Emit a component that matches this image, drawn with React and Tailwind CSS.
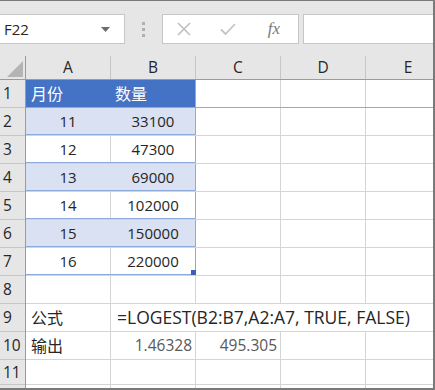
import React from 'react';

const font = { fontFamily: '"Open Sans", "Noto Sans CJK SC", sans-serif' };

const cols = ['A', 'B', 'C', 'D', 'E'];

const tableRows = [
  ['11', '33100'],
  ['12', '47300'],
  ['13', '69000'],
  ['14', '102000'],
  ['15', '150000'],
  ['16', '220000'],
];

const Cell = ({ className = '', children }) => (
  <div className={`w-[85px] h-full shrink-0 border-r border-[#d4d4d4] flex items-center ${className}`}>
    {children}
  </div>
);

const RowHead = ({ n }) => (
  <div className="w-[26px] h-full shrink-0 bg-[#e6e6e6] border-r border-[#9b9b9b] flex items-center pl-[3px] text-[15.5px] text-[#262626]">
    {n}
  </div>
);

const Row = ({ n, children, className = 'border-[#d4d4d4]' }) => (
  <div className="flex h-[28px] relative">
    <RowHead n={n} />
    <div className={`flex flex-1 border-b ${className}`}>{children}</div>
    <div className="absolute left-0 bottom-0 w-[25px] h-px bg-[#c6c6c6]" />
  </div>
);

export default function App() {
  return (
    <div
      className="w-[435px] h-[390px] overflow-hidden bg-white border-t border-r-2 border-b-2 border-[#7a7a7a] text-[#262626]"
      style={font}
    >
      {/* formula bar */}
      <div className="h-[55px] bg-[#e6e6e6] flex items-start pt-[13px]">
        <div className="w-[125px] h-[30px] bg-white border border-l-0 border-[#c6c6c6] flex items-center justify-between pl-[4px] pr-[14px]">
          <span className="text-[15px] text-[#262626]">F22</span>
          <svg width="9" height="5" viewBox="0 0 9 5"><path d="M0 0h9L4.5 5z" fill="#6b6b6b" /></svg>
        </div>
        <div className="w-[37px] h-[30px] flex flex-col items-center justify-center gap-[3px]">
          <div className="w-[3px] h-[3px] bg-[#b0b0b0]" />
          <div className="w-[3px] h-[3px] bg-[#b0b0b0]" />
          <div className="w-[3px] h-[3px] bg-[#b0b0b0]" />
        </div>
        <div className="w-[137px] h-[30px] bg-white border border-[#c6c6c6] flex items-center">
          <div className="w-[42px] flex justify-center">
            <svg width="14" height="14" viewBox="0 0 14 14"><path d="M1 1l12 12M13 1L1 13" stroke="#bfbfbf" strokeWidth="1.6" /></svg>
          </div>
          <div className="w-[46px] flex justify-center">
            <svg width="16" height="12" viewBox="0 0 16 12"><path d="M1 6.5l4.5 4.5L15 1" stroke="#c4c4c4" strokeWidth="1.8" fill="none" /></svg>
          </div>
          <div className="w-[46px] flex justify-center">
            <span className="text-[17px] italic text-[#7a7a7a]" style={{ fontFamily: '"Liberation Serif", serif' }}>fx</span>
          </div>
        </div>
        <div className="ml-[4px] flex-1 h-[30px] bg-white border border-r-0 border-[#c6c6c6]" />
      </div>

      {/* column headers */}
      <div className="flex h-[24px] bg-[#e6e6e6] border-b border-[#9b9b9b]">
        <div className="w-[26px] h-full shrink-0 border-r border-[#9b9b9b] flex items-end justify-end pr-[2px] pb-[2px]">
          <svg width="16" height="16" viewBox="0 0 16 16"><path d="M16 0V16H0z" fill="#b4b4b4" /></svg>
        </div>
        {cols.map(c => (
          <div key={c} className="w-[85px] shrink-0 h-full border-r border-[#c6c6c6] flex items-center justify-center text-[15.5px] text-[#262626]">
            {c}
          </div>
        ))}
      </div>

      {/* row 1 - table header */}
      <Row n="1" className="border-[#8ea9db]">
        <div className="w-[170px] shrink-0 h-full bg-[#4472c4] border-r border-[#8ea9db] flex items-center text-[16px] text-white">
          <span className="w-[85px] pl-[5px]">月份</span>
          <span className="pl-[4px]">数量</span>
        </div>
        <Cell />
        <Cell />
        <Cell className="border-r-0" />
      </Row>

      {tableRows.map(([a, b], i) => {
        const band = i % 2 === 0;
        return (
          <div key={a} className="flex h-[28px] relative">
            <RowHead n={i + 2} />
            <div className="flex flex-1 border-b border-[#d4d4d4]">
              <div className={`w-[170px] shrink-0 h-full flex border-r border-b border-[#8ea9db] relative ${band ? 'bg-[#d9e1f2]' : ''}`}>
                <div className={`w-[85px] h-full flex items-center justify-center text-[15px] border-r ${band ? 'border-[#d9e1f2]' : 'border-[#d4d4d4]'}`}>{a}</div>
                <div className="flex-1 h-full flex items-center justify-center text-[15px]">{b}</div>
                {i === 5 && <div className="absolute right-[-1px] bottom-[-1px] w-[5px] h-[5px] bg-[#3f5fb7]" />}
              </div>
              <div className="flex -mb-px">
                <Cell />
                <Cell />
                <Cell className="border-r-0" />
              </div>
            </div>
            <div className="absolute left-0 bottom-0 w-[25px] h-px bg-[#c6c6c6]" />
          </div>
        );
      })}

      <Row n="8">
        <Cell /><Cell /><Cell /><Cell /><Cell className="border-r-0" />
      </Row>

      <Row n="9">
        <Cell className="pl-[5px] text-[16px]">公式</Cell>
        <div className="flex-1 h-full flex items-center pl-[6px] text-[17.5px] whitespace-nowrap">
          =LOGEST(B2:B7,A2:A7, TRUE, FALSE)
        </div>
      </Row>

      <Row n="10">
        <Cell className="pl-[5px] text-[16px]">输出</Cell>
        <Cell className="justify-end pr-[3px] text-[15.5px] text-[#595959]">1.46328</Cell>
        <Cell className="justify-end pr-[3px] text-[15.5px] text-[#595959]">495.305</Cell>
        <Cell />
        <Cell className="border-r-0" />
      </Row>

      <div className="flex h-[25px] relative">
        <RowHead n="11" />
        <div className="flex flex-1 border-b border-[#d4d4d4]">
          <Cell /><Cell /><Cell /><Cell /><Cell className="border-r-0" />
        </div>
        <div className="absolute left-0 bottom-0 w-[25px] h-px bg-[#c6c6c6]" />
      </div>

      <div className="flex h-[10px]">
        <div className="w-[26px] h-full shrink-0 bg-[#e6e6e6] border-r border-[#9b9b9b]" />
        <Cell /><Cell /><Cell /><Cell /><Cell className="border-r-0" />
      </div>
    </div>
  );
}
